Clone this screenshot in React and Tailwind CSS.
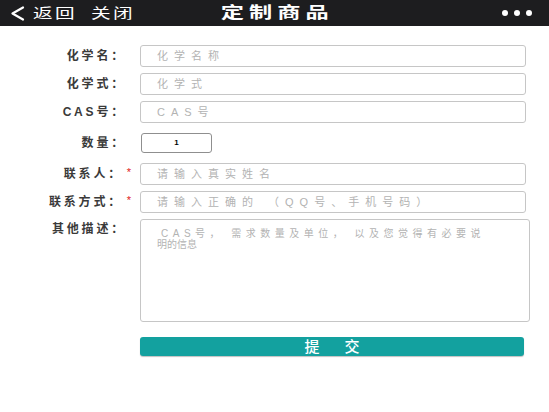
import React from "react";

const FONT = { fontFamily: '"Liberation Sans", "Noto Sans CJK SC", sans-serif' };

function Label({ text, required, top }) {
  return (
    <div
      className={`w-[140px] shrink-0 flex justify-end ${top ? "items-start pt-[4px]" : "items-center"} ${required ? "pr-[5px]" : "pr-[14px]"}`}
    >
      <span className="text-[12px] font-bold tracking-[2.8px] text-[#3a3a3a] leading-none">{text}</span>
      {required && (
        <span className="w-[12px] text-center text-[11px] text-[#e02020] leading-none -mt-[4px]">*</span>
      )}
    </div>
  );
}

function Field({ label, placeholder, required, className = "" }) {
  return (
    <div className={`flex h-[22px] ${className}`}>
      <Label text={label} required={required} />
      <input
        className="w-[386px] h-[22px] border border-[#c6c6c6] rounded-[3px] pl-[16px] text-[11px] tracking-[6px] text-[#333] placeholder:text-[#b3b3b3] outline-none bg-white"
        style={FONT}
        placeholder={placeholder}
      />
    </div>
  );
}

export default function App() {
  return (
    <div className="w-[549px] h-[412px] bg-white overflow-hidden" style={FONT}>
      {/* Header */}
      <div className="h-[26px] bg-[#1d1d1f] grid grid-cols-[1fr_auto_1fr] items-center text-white">
        <div className="flex items-center pl-[10px]">
          <svg width="15" height="15" viewBox="0 0 15 15" className="mr-[8px]">
            <path d="M13 1.5 L2.5 7.5 L13 13.5" fill="none" stroke="white" strokeWidth="2.2" strokeLinecap="round" strokeLinejoin="round" />
          </svg>
          <span className="inline-block origin-left scale-x-[1.4] text-[14px] tracking-[1.7px] leading-none">返回</span>
          <span className="inline-block origin-left scale-x-[1.4] ml-[27px] text-[14px] tracking-[1.7px] leading-none">关闭</span>
        </div>
        <div className="inline-block origin-center scale-x-[1.45] text-[16px] font-bold tracking-[3.5px] pl-[3.5px] leading-none">定制商品</div>
        <div className="flex justify-end items-center gap-[6px] pr-[17px]">
          <span className="w-[6px] h-[6px] rounded-full bg-white" />
          <span className="w-[6px] h-[6px] rounded-full bg-white" />
          <span className="w-[6px] h-[6px] rounded-full bg-white" />
        </div>
      </div>

      {/* Form */}
      <div className="pt-[19px] flex flex-col">
        <Field label="化学名：" placeholder="化学名称" />
        <Field label="化学式：" placeholder="化学式" className="mt-[6px]" />
        <Field label="CAS号：" placeholder="CAS号" className="mt-[6px]" />

        <div className="flex h-[20px] mt-[10px]">
          <Label text="数量：" />
          <div className="ml-px w-[71px] h-[20px] border-[1.5px] border-[#8f8f8f] rounded-[3px] flex items-center justify-center text-[8px] font-bold text-black">
            1
          </div>
        </div>

        <Field label="联系人：" placeholder="请输入真实姓名" required className="mt-[10px]" />
        <Field label="联系方式：" placeholder="请输入正确的 （QQ号、手机号码）" required className="mt-[6px]" />

        <div className="flex mt-[6px]">
          <Label text="其他描述：" top />
          <div className="w-[390px] h-[103px] border border-[#c6c6c6] rounded-[3px] pl-[16px] pt-[8px] text-[10px] leading-[11px] text-[#b3b3b3]">
            <div className="tracking-[4.5px] pl-[4px] whitespace-nowrap">CAS号， 需求数量及单位， 以及您觉得有必要说</div>
            <div className="tracking-[0px]">明的信息</div>
          </div>
        </div>

        <div className="flex mt-[15px]">
          <div className="w-[140px] shrink-0" />
          <button className="w-[384px] h-[19px] bg-[#13a19f] rounded-[3px] shadow-[0_1px_1px_rgba(0,0,0,0.25)] flex items-center justify-center text-white text-[15px] font-medium tracking-[25px] pl-[25px] leading-none">
            提交
          </button>
        </div>
      </div>
    </div>
  );
}
